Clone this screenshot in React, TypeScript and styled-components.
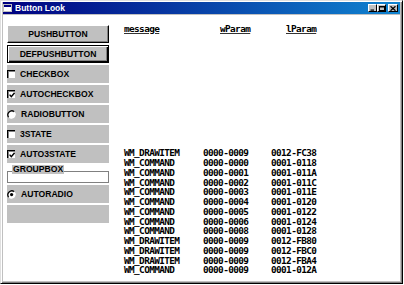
import React from 'react';
import styled, { createGlobalStyle } from 'styled-components';

const Global = createGlobalStyle`
  html, body { margin: 0; padding: 0; background: #fff; }
  body { width: 404px; height: 285px; overflow: hidden; }
`;

const Window = styled.div`
  box-sizing: border-box;
  width: 403px;
  height: 284px;
  background: #c0c0c0;
  border-top: 1px solid #dfdfdf;
  border-left: 1px solid #dfdfdf;
  border-right: 1px solid #000;
  border-bottom: 1px solid #000;
  box-shadow: inset 1px 1px #fff, inset -1px -1px #808080;
  padding: 1px 2px 2px 2px;
  display: flex;
  flex-direction: column;
`;

const TitleBar = styled.div`
  height: 12px;
  flex: none;
  display: flex;
  align-items: center;
  background: linear-gradient(to right, #000080, #1084d0);
  padding-right: 2px;
`;

const TitleText = styled.span`
  font-family: "Liberation Sans", Arial, sans-serif;
  font-weight: bold;
  font-size: 8.5px;
  color: #fff;
  margin-left: 3px;
  flex: 1;
`;

const CapButton = styled.div<{ $gap?: boolean; $w?: number }>`
  box-sizing: border-box;
  width: ${(p) => p.$w ?? 9}px;
  height: 8px;
  margin-left: ${(p) => (p.$gap ? 2 : 0)}px;
  background: #c0c0c0;
  border-top: 1px solid #fff;
  border-left: 1px solid #fff;
  border-right: 1px solid #000;
  border-bottom: 1px solid #000;
  display: flex;
  align-items: center;
  justify-content: center;
`;

const Client = styled.div`
  flex: 1;
  margin-top: 1px;
  background: #fff;
  display: flex;
  min-height: 0;
`;

const Controls = styled.div`
  display: flex;
  flex-direction: column;
  gap: 2px;
  padding: 10px 0 0 4px;
  width: 102px;
  flex: none;
`;

const labelFont = `
  font-family: "Liberation Sans", Arial, sans-serif;
  font-weight: bold;
  font-size: 8.6px;
  color: #000;
`;

const PushButton = styled.div<{ $default?: boolean }>`
  ${labelFont}
  box-sizing: border-box;
  height: 18px;
  background: #c0c0c0;
  display: flex;
  align-items: center;
  justify-content: center;
  border-top: 1px solid ${(p) => (p.$default ? '#000' : '#fff')};
  border-left: 1px solid ${(p) => (p.$default ? '#000' : '#fff')};
  border-right: 1px solid #000;
  border-bottom: 1px solid #000;
  box-shadow: ${(p) =>
    p.$default
      ? 'inset 1px 1px #fff, inset -1px -1px #000, inset -2px -2px #808080'
      : 'inset -1px -1px #808080'};
`;

const Bar = styled.div`
  ${labelFont}
  box-sizing: border-box;
  height: 18px;
  background: #c0c0c0;
  display: flex;
  align-items: center;
  gap: 5px;
`;

const CheckBox = styled.div`
  box-sizing: border-box;
  width: 8px;
  height: 8px;
  background: #fff;
  border-top: 1px solid #000;
  border-left: 1px solid #000;
  box-shadow: inset 1px 1px #808080;
  display: flex;
  align-items: center;
  justify-content: center;
  flex: none;
`;

const GroupBox = styled.div`
  ${labelFont}
  box-sizing: border-box;
  height: 18px;
  display: flex;
  flex-direction: column;
`;

const GroupLabel = styled.span`
  align-self: flex-start;
  margin-left: 5px;
  background: #c0c0c0;
  line-height: 9px;
  padding: 0 1px;
  position: relative;
  z-index: 1;
`;

const GroupFrame = styled.div`
  box-sizing: border-box;
  flex: 1;
  margin-top: -3px;
  border: 1px solid #808080;
  box-shadow: 1px 1px #fff, inset 1px 1px #fff;
  background: #fff;
`;

const Log = styled.div`
  margin-left: 15px;
  display: flex;
  flex-direction: column;
  padding: 9px 0 6px 0;
  font-family: "DejaVu Sans Mono", "Liberation Mono", monospace;
  font-weight: bold;
  font-size: 9.4px;
  letter-spacing: -0.61px;
  line-height: 9.75px;
  color: #000;
  flex: 1;
`;

const Header = styled.div`
  display: grid;
  grid-template-columns: 96px 66px auto;
  text-decoration: underline;
  text-decoration-thickness: 1px;
  text-underline-offset: 1px;
  text-decoration-color: #333;
`;

const Lines = styled.div`
  margin-top: auto;
  display: flex;
  flex-direction: column;
`;

const Line = styled.div`
  display: grid;
  grid-template-columns: 79px 68px auto;
  white-space: pre;
`;

const Check = () => (
  <svg width="6" height="6" viewBox="0 0 6 6">
    <path d="M0.6 2.6 L2.3 4.6 L5.6 0.8" fill="none" stroke="#000" strokeWidth="1.4" />
  </svg>
);

const Radio = ({ checked }: { checked?: boolean }) => (
  <svg width="9" height="9" viewBox="0 0 9 9" style={{ flex: 'none' }}>
    <circle cx="4.5" cy="4.5" r="4" fill="#fff" />
    <path d="M1.7 7.3 A4 4 0 0 1 7.3 1.7" fill="none" stroke="#000" strokeWidth="1.3" />
    <path d="M7.3 1.7 A4 4 0 0 1 1.7 7.3" fill="none" stroke="#fff" strokeWidth="1" />
    {checked && <circle cx="4.6" cy="4.6" r="1.6" fill="#000" />}
  </svg>
);

const rows: [string, string, string][] = [
  ['WM_DRAWITEM', '0000-0009', '0012-FC38'],
  ['WM_COMMAND', '0000-0000', '0001-0118'],
  ['WM_COMMAND', '0000-0001', '0001-011A'],
  ['WM_COMMAND', '0000-0002', '0001-011C'],
  ['WM_COMMAND', '0000-0003', '0001-011E'],
  ['WM_COMMAND', '0000-0004', '0001-0120'],
  ['WM_COMMAND', '0000-0005', '0001-0122'],
  ['WM_COMMAND', '0000-0006', '0001-0124'],
  ['WM_COMMAND', '0000-0008', '0001-0128'],
  ['WM_DRAWITEM', '0000-0009', '0012-FB80'],
  ['WM_DRAWITEM', '0000-0009', '0012-FBC0'],
  ['WM_DRAWITEM', '0000-0009', '0012-FBA4'],
  ['WM_COMMAND', '0000-0009', '0001-012A'],
];

export default function App() {
  return (
    <>
      <Global />
      <Window>
        <TitleBar>
          <svg width="9" height="8" viewBox="0 0 9 8">
            <rect x="0.5" y="0.5" width="8" height="7" fill="#fff" stroke="#c0c0c0" />
            <rect x="1" y="1" width="7" height="2" fill="#000080" />
          </svg>
          <TitleText>Button Look</TitleText>
          <CapButton>
            <svg width="5" height="5" viewBox="0 0 5 5">
              <rect x="0.5" y="3.5" width="3.5" height="1.2" fill="#000" />
            </svg>
          </CapButton>
          <CapButton>
            <svg width="6" height="5" viewBox="0 0 6 5">
              <rect x="0.5" y="0.5" width="5" height="4" fill="none" stroke="#000" strokeWidth="1" />
              <rect x="0" y="0" width="6" height="1.5" fill="#000" />
            </svg>
          </CapButton>
          <CapButton $gap $w={10}>
            <svg width="6" height="5" viewBox="0 0 6 5">
              <path d="M0.5 0.3 L5.5 4.7 M5.5 0.3 L0.5 4.7" stroke="#000" strokeWidth="1.3" />
            </svg>
          </CapButton>
        </TitleBar>
        <Client>
          <Controls>
            <PushButton>PUSHBUTTON</PushButton>
            <PushButton $default>DEFPUSHBUTTON</PushButton>
            <Bar>
              <CheckBox />
              CHECKBOX
            </Bar>
            <Bar>
              <CheckBox>
                <Check />
              </CheckBox>
              AUTOCHECKBOX
            </Bar>
            <Bar>
              <Radio />
              RADIOBUTTON
            </Bar>
            <Bar>
              <CheckBox />
              3STATE
            </Bar>
            <Bar>
              <CheckBox>
                <Check />
              </CheckBox>
              AUTO3STATE
            </Bar>
            <GroupBox>
              <GroupLabel>GROUPBOX</GroupLabel>
              <GroupFrame />
            </GroupBox>
            <Bar>
              <Radio checked />
              AUTORADIO
            </Bar>
            <Bar />
          </Controls>
          <Log>
            <Header>
              <span>message</span>
              <span>wParam</span>
              <span>lParam</span>
            </Header>
            <Lines>
              {rows.map((r, i) => (
                <Line key={i}>
                  <span>{r[0]}</span>
                  <span>{r[1]}</span>
                  <span>{r[2]}</span>
                </Line>
              ))}
            </Lines>
          </Log>
        </Client>
      </Window>
    </>
  );
}
